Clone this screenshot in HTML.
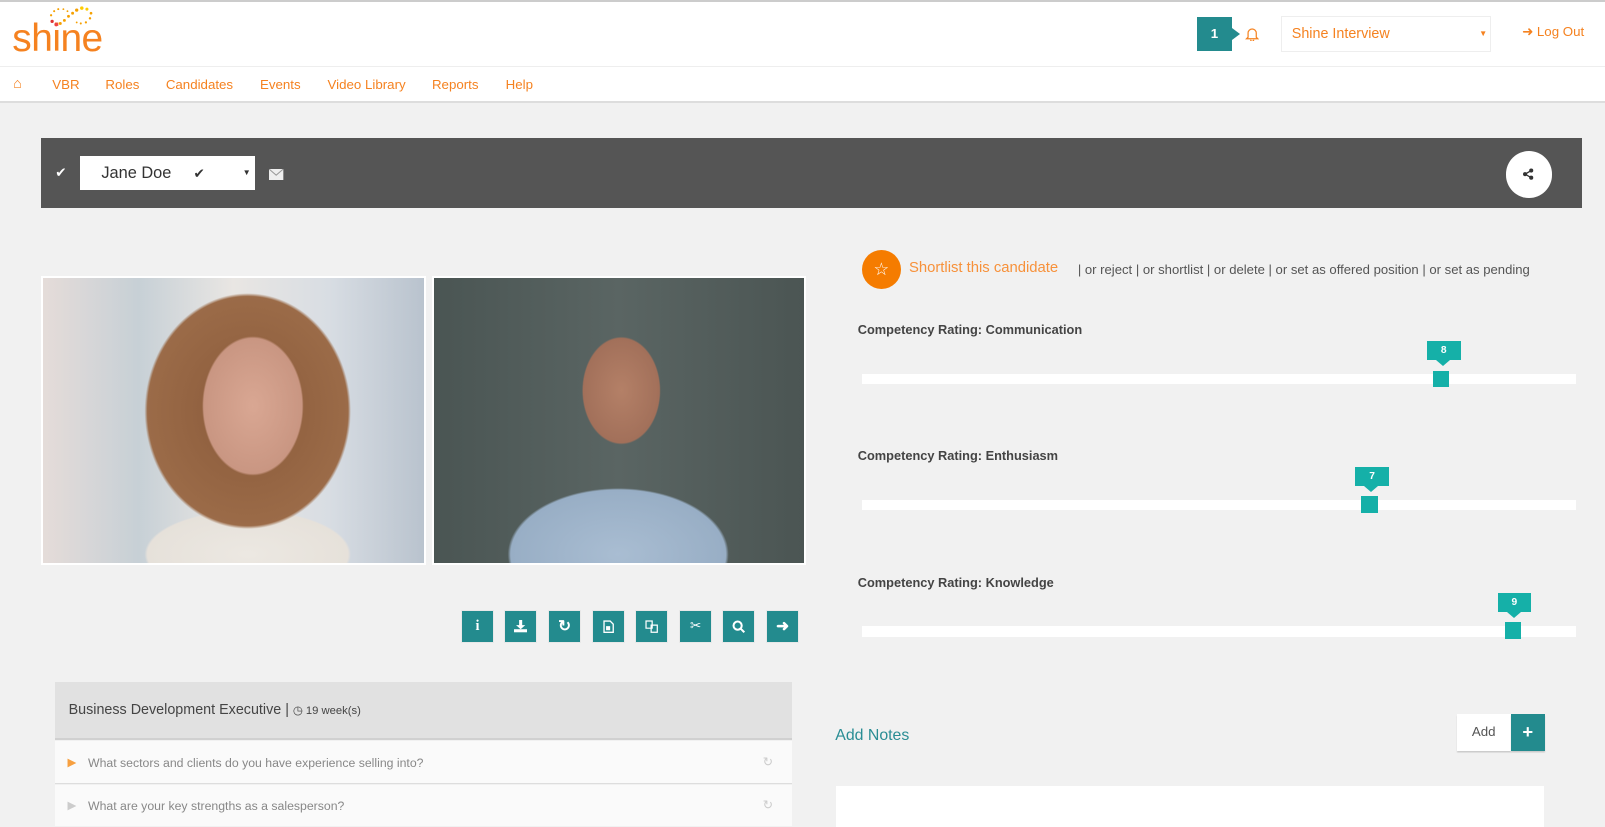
<!DOCTYPE html>
<html><head><meta charset="utf-8"><style>
html{zoom:1.0236}
*{box-sizing:border-box;margin:0;padding:0}
body{width:1568px;height:795px;overflow:hidden;background:#f1f1f1;font-family:"Liberation Sans",sans-serif;position:relative}
.a{position:absolute}
.or{color:#f58220}
.tb{background:#238b8e}
.btn{position:absolute;top:596px;width:33px;height:32px;background:#238b8e;border:1px solid #e8e8e8;display:flex;align-items:center;justify-content:center}
.lbl{position:absolute;left:838px;font-size:12.5px;font-weight:bold;color:#444}
.track{position:absolute;left:842px;width:698px;height:10px;background:#fff}
.tip{position:absolute;width:33px;height:19px;background:#15b0a8;color:#fff;font-size:10px;font-weight:bold;text-align:center;line-height:19px}
.tip:after{content:"";position:absolute;left:9px;top:19px;border:7px solid transparent;border-top:6px solid #15b0a8;border-bottom:0}
.hd{position:absolute;width:16px;height:16px;background:#15b0a8}
</style></head><body>
<div class="a" style="left:0;top:0;width:1568px;height:101px;background:#fff;border-top:2px solid #ccc;border-bottom:2px solid #ddd"></div>
<div class="a" style="left:0;top:64px;width:1568px;height:1px;background:#eee"></div>
<div class="a or" style="left:12px;top:20px;font-size:38px;letter-spacing:-0.5px;line-height:38px">shine</div>
<svg class="a" style="left:46px;top:4px" width="50" height="24"><g fill="#f5a000"><circle cx="5" cy="17" r="1.6" fill="#d33"/><circle cx="9" cy="20" r="1.8" fill="#e44"/><circle cx="13" cy="19" r="1.4"/><circle cx="17" cy="16" r="1.4"/><circle cx="21" cy="12" r="1.4"/><circle cx="25" cy="9" r="1.4"/><circle cx="29" cy="6" r="1.6"/><circle cx="34" cy="4" r="1.7" fill="#fc0"/><circle cx="39" cy="5" r="1.5" fill="#fc0"/><circle cx="43" cy="9" r="1.3"/><circle cx="42" cy="14" r="1.2"/><circle cx="38" cy="18" r="1.1"/><circle cx="33" cy="19" r="1"/><circle cx="29" cy="18" r="0.9"/><circle cx="4" cy="11" r="1.1"/><circle cx="7" cy="7" r="1"/><circle cx="11" cy="5" r="1"/><circle cx="16" cy="5" r="0.9"/><circle cx="20" cy="7" r="0.9"/></g></svg>
<div class="a or" style="left:13px;top:74px;font-size:14px;font-weight:bold">⌂</div>
<div class="a or" style="top:75px;left:51px;font-size:13px">VBR</div>
<div class="a or" style="top:75px;left:103px;font-size:13px">Roles</div>
<div class="a or" style="top:75px;left:162px;font-size:13px">Candidates</div>
<div class="a or" style="top:75px;left:254px;font-size:13px">Events</div>
<div class="a or" style="top:75px;left:320px;font-size:13px">Video Library</div>
<div class="a or" style="top:75px;left:422px;font-size:13px">Reports</div>
<div class="a or" style="top:75px;left:494px;font-size:13px">Help</div>
<div class="a tb" style="left:1169px;top:17px;width:35px;height:33px;color:#fff;font-size:13px;font-weight:bold;text-align:center;line-height:33px">1</div>
<div class="a" style="left:1204px;top:27px;border:6px solid transparent;border-left:8px solid #238b8e;border-right:0"></div>
<svg class="a" style="left:1216px;top:26px" width="14" height="14" fill="none" stroke="#f58220" stroke-width="1.2"><path d="M3 10V6a4 4 0 0 1 8 0v4l1.5 1.5h-11z M5.5 12.5a1.5 1.5 0 0 0 3 0"/></svg>
<div class="a" style="left:1251px;top:16px;width:206px;height:35px;background:#fff;border:1px solid #eee"></div>
<div class="a or" style="left:1262px;top:25px;font-size:14px">Shine Interview</div>
<div class="a or" style="left:1445px;top:28px;font-size:8px">▼</div>
<div class="a or" style="left:1487px;top:23px;font-size:13px">&#10140; Log Out</div>

<div class="a" style="left:40px;top:135px;width:1506px;height:68px;background:#555"></div>
<div class="a" style="left:54px;top:161px;color:#fff;font-size:13px">✔</div>
<div class="a" style="left:78px;top:152px;width:171px;height:34px;background:#fff"></div>
<div class="a" style="left:99px;top:160px;font-size:16px;color:#333">Jane Doe</div>
<div class="a" style="left:189px;top:162px;font-size:13px;color:#333">✔</div>
<div class="a" style="left:237px;top:164px;font-size:8px;color:#333">▼</div>
<svg class="a" style="left:263px;top:165px" width="14" height="11"><rect width="14" height="11" fill="#eee"/><path d="M0 0l7 6 7-6" stroke="#999" fill="none"/></svg>
<div class="a" style="left:1471px;top:148px;width:45px;height:45px;border-radius:50%;background:#fff"></div>
<svg class="a" style="left:1487px;top:164px" width="12" height="12" fill="#333"><circle cx="9" cy="2.5" r="2"/><circle cx="3" cy="6" r="2"/><circle cx="9" cy="9.5" r="2"/><path d="M9 2.5L3 6l6 3.5" stroke="#333" stroke-width="1.3" fill="none"/></svg>

<div class="a" style="left:40px;top:270px;width:376px;height:282px;background:#fff;padding:2px">
<div style="width:100%;height:100%;background:radial-gradient(ellipse 80px 110px at 205px 125px,#d9a793 0,#c99682 60%,transparent 62%),radial-gradient(ellipse 140px 160px at 200px 130px,#8a5a3a 0,#9b6b48 70%,transparent 72%),radial-gradient(ellipse 140px 60px at 200px 270px,#ece8e2 0,#e6e1da 70%,transparent 72%),linear-gradient(90deg,#e5dcd9 0,#c7d0d6 25%,#e9e6e3 50%,#d8dde3 75%,#b9c3ce 100%)"></div></div>
<div class="a" style="left:422px;top:270px;width:365px;height:282px;background:#fff;padding:2px">
<div style="width:100%;height:100%;background:radial-gradient(ellipse 62px 85px at 183px 110px,#b48067 0,#a2705a 60%,transparent 62%),radial-gradient(ellipse 150px 90px at 180px 270px,#a9bdd2 0,#98aec5 70%,transparent 72%),linear-gradient(90deg,#4a5553,#5a6563 50%,#4b5553)"></div></div>

<div class="btn" style="left:450px"><span style="color:#fff;font-weight:bold;font-size:14px;font-family:'Liberation Serif'">i</span></div>
<div class="btn" style="left:492px"><svg width="13" height="12" fill="#fff"><path d="M5 0h3v5h3l-4.5 4L2 5h3z"/><rect x="0" y="9" width="13" height="3"/></svg></div>
<div class="btn" style="left:535px"><span style="color:#fff;font-weight:bold;font-size:15px">↻</span></div>
<div class="btn" style="left:578px"><svg width="11" height="13"><path d="M1 1h6l3 3v8H1z" fill="none" stroke="#fff" stroke-width="1.3"/><rect x="3" y="6" width="4" height="4" fill="#fff"/></svg></div>
<div class="btn" style="left:620px"><svg width="13" height="13" fill="none" stroke="#fff" stroke-width="1.2"><path d="M1 1h6v7H1zM6 5h6v7H6z"/></svg></div>
<div class="btn" style="left:663px"><span style="color:#fff;font-size:13px">✂</span></div>
<div class="btn" style="left:705px"><svg width="13" height="13" fill="none" stroke="#fff" stroke-width="2"><circle cx="5.5" cy="5.5" r="4"/><path d="M8.5 8.5l3.5 3.5"/></svg></div>
<div class="btn" style="left:748px"><span style="color:#fff;font-weight:bold;font-size:15px">➜</span></div>

<div class="a" style="left:54px;top:666px;width:720px;height:57px;background:#e1e1e1;border-bottom:2px solid #d0d0d0"></div>
<div class="a" style="left:67px;top:686px;font-size:14px;color:#444">Business Development Executive | <span style="font-size:11px">&#9719; 19 week(s)</span></div>
<div class="a" style="left:54px;top:724px;width:720px;height:42px;background:#fafafa;border-bottom:1px solid #ddd"></div>
<div class="a" style="left:54px;top:767px;width:720px;height:40px;background:#fafafa"></div>
<div class="a" style="left:66px;top:739px;font-size:11px;color:#f7a040">▶</div>
<div class="a" style="left:86px;top:739px;font-size:12px;color:#888">What sectors and clients do you have experience selling into?</div>
<div class="a" style="left:745px;top:738px;font-size:12px;color:#ccc">↻</div>
<div class="a" style="left:66px;top:781px;font-size:11px;color:#ccc">▶</div>
<div class="a" style="left:86px;top:781px;font-size:12px;color:#888">What are your key strengths as a salesperson?</div>
<div class="a" style="left:745px;top:780px;font-size:12px;color:#ccc">↻</div>

<div class="a" style="left:842px;top:244px;width:38px;height:38px;border-radius:50%;background:#f57c00;color:#fff;text-align:center;line-height:38px;font-size:17px">☆</div>
<div class="a" style="left:888px;top:254px;font-size:14.5px;color:#f7913a">Shortlist this candidate</div>
<div class="a" style="left:1053px;top:256px;font-size:12.8px;color:#555">| or reject | or shortlist | or delete | or set as offered position | or set as pending</div>

<div class="lbl" style="top:315px">Competency Rating: Communication</div>
<div class="track" style="top:365px"></div>
<div class="tip" style="left:1394px;top:333px">8</div>
<div class="hd" style="left:1400px;top:362px"></div>
<div class="lbl" style="top:438px">Competency Rating: Enthusiasm</div>
<div class="track" style="top:488px"></div>
<div class="tip" style="left:1324px;top:456px">7</div>
<div class="hd" style="left:1330px;top:485px"></div>
<div class="lbl" style="top:562px">Competency Rating: Knowledge</div>
<div class="track" style="top:612px"></div>
<div class="tip" style="left:1463px;top:579px">9</div>
<div class="hd" style="left:1470px;top:608px"></div>

<div class="a" style="left:816px;top:710px;font-size:15.5px;color:#2a8d94">Add Notes</div>
<div class="a" style="left:1423px;top:698px;width:53px;height:36px;background:#fff;box-shadow:0 2px 1px #ccc;font-size:13px;color:#555;text-align:center;line-height:36px">Add</div>
<div class="a tb" style="left:1476px;top:698px;width:33px;height:36px;box-shadow:0 2px 1px #ccc;color:#fff;font-weight:bold;font-size:18px;text-align:center;line-height:35px">+</div>
<div class="a" style="left:817px;top:768px;width:691px;height:40px;background:#fff"></div>
</body></html>
